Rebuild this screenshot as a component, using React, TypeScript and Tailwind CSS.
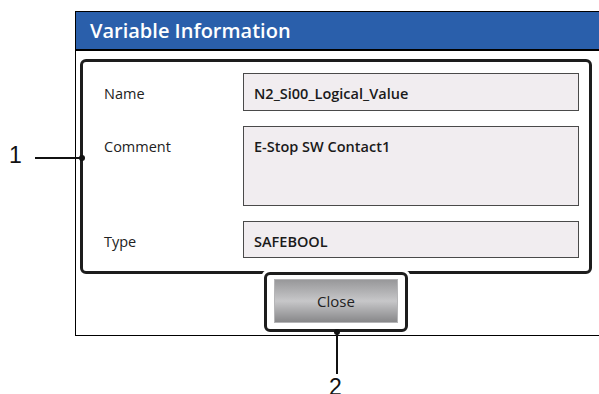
const fields = [
  { label: 'Name', value: 'N2_Si00_Logical_Value', height: 'h-[38px]' },
  { label: 'Comment', value: 'E-Stop SW Contact1', height: 'h-[80px]' },
  { label: 'Type', value: 'SAFEBOOL', height: 'h-[37px]' },
];

const App = () => {
  return (
    <div className="relative w-[599px] h-[394px] overflow-hidden bg-white font-['Open_Sans','Noto_Sans',sans-serif]">
      <div className="pt-[11px] pl-[75px]">
        {/* Dialog window */}
        <div className="w-[540px] border-[1.5px] border-black bg-white">
          <div className="h-[39px] bg-[#2a5fab] border-b-2 border-black flex items-center pl-[14px]">
            <span className="text-white text-[20px] font-semibold leading-none">Variable Information</span>
          </div>

          <div className="w-[512px] ml-[4px] pt-[8px] pb-[3px] flex flex-col">
            {/* Callout 1 box */}
            <div className="rounded-[6px] border-[3px] border-[#1d1d1d] pl-[21px] pr-[10px] pt-[11px] pb-[12px] flex flex-col gap-[15px]">
              {fields.map((f) => (
                <div key={f.label} className="flex items-start">
                  <div className="w-[139px] h-[38px] pt-[3px] flex items-center text-[14.5px] text-[#222]">{f.label}</div>
                  <div className={`flex-1 ${f.height} border border-[#4a4a4a] bg-[#f1edf0] pl-[10px] pt-[9px] text-[14.5px] font-semibold text-[#1a1a1a]`}>
                    {f.value}
                  </div>
                </div>
              ))}
            </div>

            {/* Callout 2 box around Close button */}
            <div className="flex justify-center -mt-[2px]">
              <div className="relative rounded-[6px] border-[3px] border-[#1d1d1d] bg-white shadow-[0_0_0_3px_#ffffff] px-[7px] pt-[4px] pb-[6px]">
                <button className="w-[124px] h-[44px] border border-[#b5b5b7] bg-gradient-to-b from-[#98989a] via-[#c7c7c9] to-[#88888a] text-[15px] text-[#222]">
                  Close
                </button>
              </div>
            </div>
          </div>
        </div>
      </div>

      {/* Callout 1 leader */}
      <span className="absolute left-[9px] top-[144px] text-[23px] leading-none text-[#111] font-['Liberation_Sans',sans-serif]">1</span>
      <div className="absolute left-[35px] top-[157px] w-[46px] h-[1.5px] bg-[#111]" />
      <div className="absolute left-[79px] top-[155px] w-[6px] h-[6px] rounded-full bg-[#111]" />

      {/* Callout 2 leader */}
      <div className="absolute left-[334px] top-[329px] w-[6px] h-[6px] rounded-full bg-[#111]" />
      <div className="absolute left-[336px] top-[332px] w-[1.5px] h-[42px] bg-[#111]" />
      <span className="absolute left-[329px] top-[376px] text-[23px] leading-none text-[#111] font-['Liberation_Sans',sans-serif]">2</span>
    </div>
  );
};

export default App;
